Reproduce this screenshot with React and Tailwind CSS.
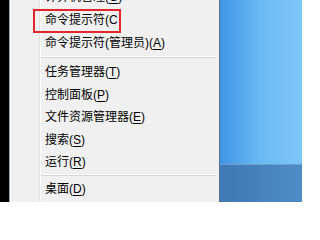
import React from 'react';

const font = { fontFamily: '"Liberation Sans", "Noto Sans CJK SC", sans-serif' };

function Item({ label, hotkey, tail = ')', h = 'h-[22.5px]', children }) {
  return (
    <div className={`relative flex items-center pl-[4px] text-[12px] text-black leading-none ${h}`}>
      <span>
        {label}(<span className={hotkey === 'C' ? '' : 'underline underline-offset-2'}>{hotkey}</span>{tail}
      </span>
      {children}
    </div>
  );
}

function Separator({ className }) {
  return (
    <div className={`mr-[3px] ${className}`}>
      <div className="h-px bg-white" />
      <div className="h-px bg-[#d7d7d7]" />
    </div>
  );
}

export default function App() {
  return (
    <div className="flex w-[302px] h-[202px] overflow-hidden bg-black" style={font}>
      {/* left edge */}
      <div className="w-[9px] bg-black" />

      {/* context menu */}
      <div className="flex w-[211px] border-l border-[#8ea7c6] border-r border-r-[#59718c] bg-[#f0f0f0]">
        <div className="w-[30px] border-l border-white border-r border-r-[#e2e3e3]" />
        <div className="flex-1 border-l border-white -mt-[15px]">
          <Item label="计算机管理" hotkey="G" h="h-[23px]" />
          <Item label="命令提示符" hotkey="C" tail="" h="h-[23px]">
            <div className="absolute left-[-8px] top-[1px] w-[88px] h-[24px] border-2 border-[#e3262b]" />
          </Item>
          <Item label="命令提示符(管理员)" hotkey="A" h="h-[23px]" />
          <Separator className="mt-[2px] mb-[3px]" />
          <Item label="任务管理器" hotkey="T" />
          <Item label="控制面板" hotkey="P" />
          <Item label="文件资源管理器" hotkey="E" />
          <Item label="搜索" hotkey="S" />
          <Item label="运行" hotkey="R" />
          <Separator className="mt-0 mb-[2px]" />
          <Item label="桌面" hotkey="D" h="h-[23px]" />
        </div>
      </div>

      {/* desktop */}
      <div className="flex flex-1 flex-col">
        <div className="flex-1 bg-gradient-to-r from-[#3f95e3] via-[#6bbaf5] to-[#7cc6fa]" />
        <div className="h-[38px] border-t border-[#6d9fd0] bg-gradient-to-r from-[#3f78b4] to-[#4f8cc7]" />
      </div>
    </div>
  );
}
